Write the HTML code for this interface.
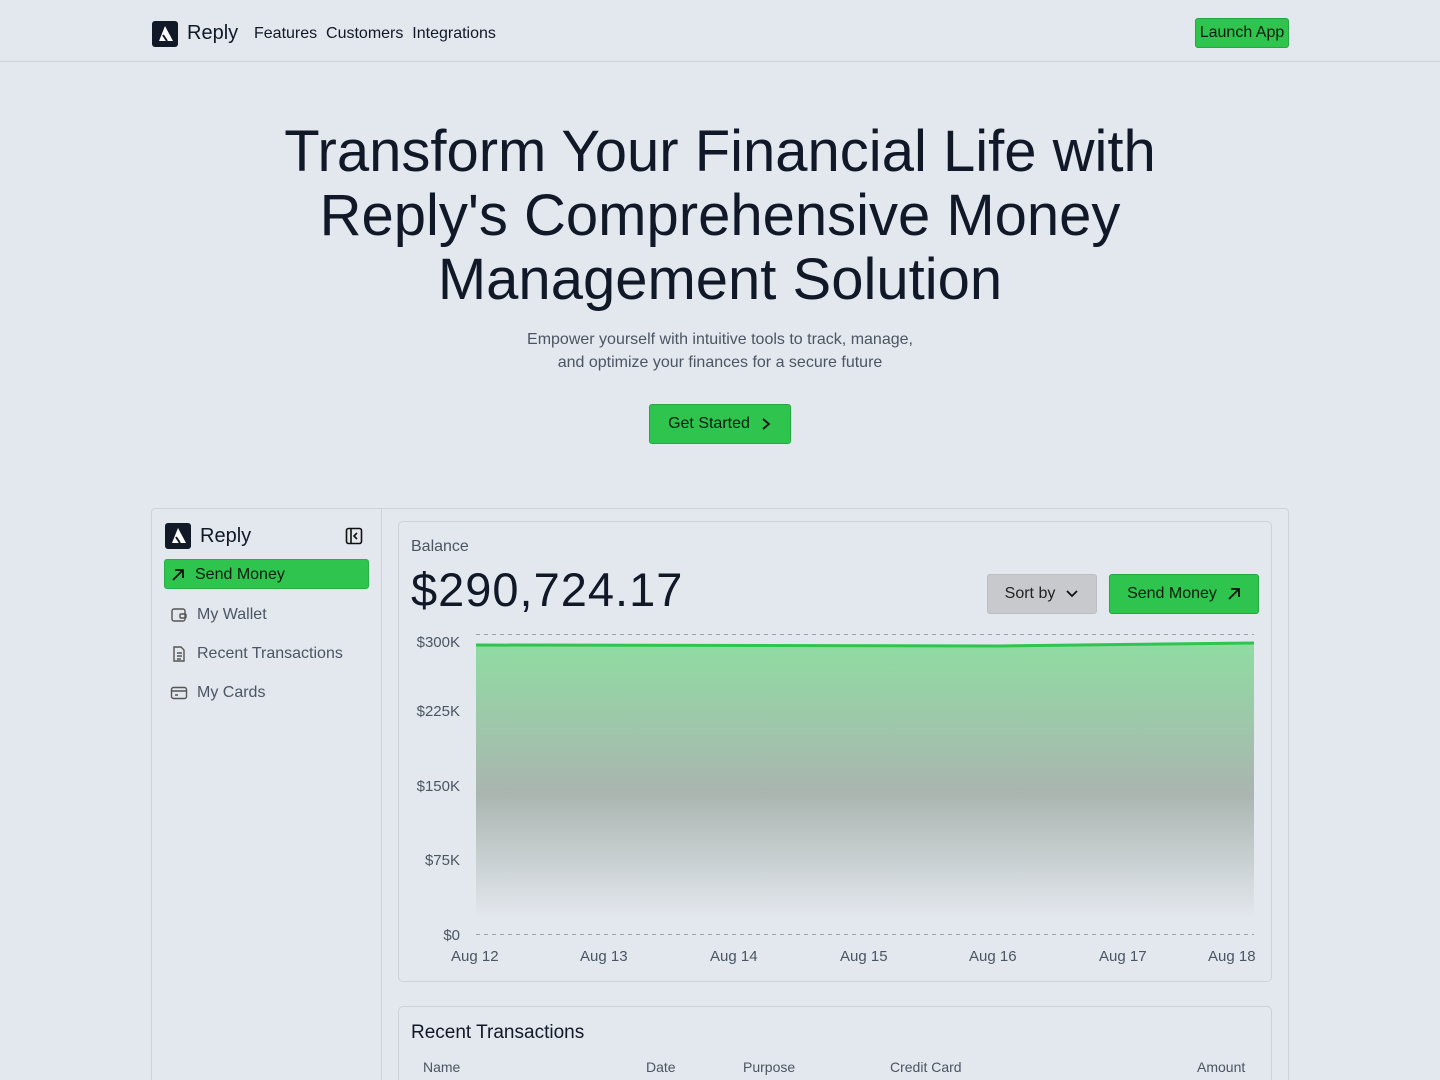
<!DOCTYPE html>
<html style="overflow:hidden;height:1080px"><head><meta charset="utf-8"><style>
*{box-sizing:border-box;margin:0;padding:0}
body{width:1440px;height:1080px;overflow:hidden;background:#e3e7ee;font-family:"Liberation Sans",sans-serif;color:#111827;position:relative}
#wrap{position:absolute;left:0;top:0;width:1440px;height:1080px;overflow:hidden}
.nav{position:absolute;top:0;left:0;width:1440px;height:62px;border-bottom:1px solid #cdd2da}
.logo{position:absolute;width:26px;height:26px;background:#111827;border-radius:3px}
.abs{position:absolute;white-space:nowrap}
.btn{position:absolute;background:#2ec44e;border:1px solid #22a83e;border-radius:3px;color:#0b1a0f;font-size:16px;display:flex;align-items:center;justify-content:center;gap:10px}
h1{position:absolute;top:120px;left:0;width:1440px;text-align:center;font-size:58px;font-weight:400;line-height:64px;letter-spacing:0}
.side{position:absolute;left:151px;top:508px;width:231px;height:600px;border:1px solid #cdd2da;border-radius:4px 0 0 0}
.main{position:absolute;left:381px;top:508px;width:908px;height:600px;border:1px solid #cdd2da;border-left:none;border-radius:0 4px 0 0}
.card{position:absolute;border:1px solid #cdd2da;border-radius:5px}
.item{position:absolute;left:170px;font-size:16px;color:#4b5563;display:flex;align-items:center;gap:9px}
.yl{position:absolute;width:60px;text-align:right;left:400px;font-size:15px;color:#4b5563}
.xl{position:absolute;top:948px;font-size:15px;color:#4b5563}
.th{position:absolute;top:1059px;font-size:14px;color:#4b5563}
</style></head><body><div id="wrap">
<div class="nav">
 <div class="logo" style="left:152px;top:21px"><svg width="26" height="26" viewBox="0 0 26 26"><path d="M13 5 L21 20 L7 20 Z" fill="#fff"/><path d="M11 14 L15 20" stroke="#111827" stroke-width="2"/></svg></div>
 <div class="abs" style="left:187px;top:22px;font-size:20px">Reply</div>
 <div class="abs" style="left:254px;top:25px;font-size:16px">Features&nbsp; Customers&nbsp; Integrations</div>
 <div class="btn" style="left:1195px;top:18px;width:94px;height:30px;font-size:16px">Launch App</div>
</div>
<h1>Transform Your Financial Life with<br>Reply's Comprehensive Money<br>Management Solution</h1>
<div class="abs" style="left:0;width:1440px;text-align:center;top:328px;font-size:16px;line-height:23px;color:#4b5563">Empower yourself with intuitive tools to track, manage,<br>and optimize your finances for a secure future</div>
<div class="btn" style="left:649px;top:404px;width:142px;height:40px">Get Started <svg width="12" height="14" viewBox="0 0 12 14"><path d="M3 2 L9 7 L3 12" stroke="#111" stroke-width="1.8" fill="none"/></svg></div>

<div class="side"></div>
<div class="main"></div>
<div class="logo" style="left:165px;top:523px"><svg width="26" height="26" viewBox="0 0 26 26"><path d="M13 5 L21 20 L7 20 Z" fill="#fff"/><path d="M11 14 L15 20" stroke="#111827" stroke-width="2"/></svg></div>
<div class="abs" style="left:200px;top:525px;font-size:20px">Reply</div>
<svg class="abs" style="left:345px;top:527px" width="18" height="18" viewBox="0 0 18 18"><rect x="1.5" y="1.5" width="15" height="15" rx="2" stroke="#111" stroke-width="1.6" fill="none"/><path d="M6 2v14M12 6l-3 3 3 3" stroke="#111" stroke-width="1.6" fill="none"/></svg>
<div class="abs" style="left:164px;top:559px;width:205px;height:30px;background:#2ec44e;border-radius:3px;border:1px solid #26b045"></div>
<div class="item" style="top:566px;color:#0b1a0f"><svg width="16" height="16" viewBox="0 0 16 16"><path d="M3 13 L13 3 M5 3h8v8" stroke="#111" stroke-width="1.8" fill="none"/></svg>Send Money</div>
<div class="item" style="top:606px"><svg width="18" height="18" viewBox="0 0 18 18"><rect x="2" y="3" width="13" height="12" rx="2" stroke="#555" stroke-width="1.4" fill="none"/><rect x="10" y="8" width="6" height="4" rx="1" stroke="#555" stroke-width="1.4" fill="none"/></svg>My Wallet</div>
<div class="item" style="top:645px"><svg width="18" height="18" viewBox="0 0 18 18"><path d="M4 2h7l3 3v11H4z M7 8h5M7 11h5M7 14h4" stroke="#555" stroke-width="1.4" fill="none"/></svg>Recent Transactions</div>
<div class="item" style="top:684px"><svg width="18" height="18" viewBox="0 0 18 18"><rect x="1.5" y="3.5" width="15" height="11" rx="2" stroke="#555" stroke-width="1.4" fill="none"/><path d="M2 7h14M5 11h3" stroke="#555" stroke-width="1.4"/></svg>My Cards</div>

<div class="card" style="left:398px;top:521px;width:874px;height:461px"></div>
<div class="abs" style="left:411px;top:538px;font-size:16px;color:#4b5563">Balance</div>
<div class="abs" style="left:411px;top:562px;font-size:47px;letter-spacing:1px">$290,724.17</div>
<div class="btn" style="left:987px;top:574px;width:110px;height:40px;background:#c7c9cd;border-color:#bbbec3;color:#222">Sort by <svg width="14" height="10" viewBox="0 0 14 10"><path d="M2 2l5 5 5-5" stroke="#111" stroke-width="1.8" fill="none"/></svg></div>
<div class="btn" style="left:1109px;top:574px;width:150px;height:40px">Send Money <svg width="14" height="14" viewBox="0 0 14 14"><path d="M2 12L12 2M4 2h8v8" stroke="#111" stroke-width="1.8" fill="none"/></svg></div>
<svg class="abs" style="left:0;top:0" width="1440" height="1000">
<defs><linearGradient id="g" x1="0" y1="0" x2="0" y2="1"><stop offset="0" stop-color="#8fdca2"/><stop offset="0.55" stop-color="#aab5b0"/><stop offset="1" stop-color="#e3e7ee"/></linearGradient></defs>
<g stroke="#9ca3af" stroke-dasharray="4 4" stroke-width="1"><line x1="476" x2="1254" y1="634.5" y2="634.5"/><line x1="476" x2="1254" y1="709.5" y2="709.5"/><line x1="476" x2="1254" y1="784.5" y2="784.5"/><line x1="476" x2="1254" y1="859.5" y2="859.5"/><line x1="476" x2="1254" y1="934.5" y2="934.5"/></g>
<path d="M476 645 L1000 646 L1254 643 L1254 918 L476 918Z" fill="url(#g)"/>
<path d="M476 645 L1000 646 L1254 643" stroke="#2ec44e" stroke-width="3" fill="none"/>
</svg>
<div class="yl" style="top:634px">$300K</div>
<div class="yl" style="top:703px">$225K</div>
<div class="yl" style="top:778px">$150K</div>
<div class="yl" style="top:852px">$75K</div>
<div class="yl" style="top:927px">$0</div>
<div class="xl" style="left:451px">Aug 12</div><div class="xl" style="left:580px">Aug 13</div><div class="xl" style="left:710px">Aug 14</div><div class="xl" style="left:840px">Aug 15</div><div class="xl" style="left:969px">Aug 16</div><div class="xl" style="left:1099px">Aug 17</div><div class="xl" style="left:1208px">Aug 18</div>

<div class="card" style="left:398px;top:1006px;width:874px;height:100px"></div>
<div class="abs" style="left:411px;top:1022px;font-size:19px">Recent Transactions</div>
<div class="th" style="left:423px">Name</div><div class="th" style="left:646px">Date</div><div class="th" style="left:743px">Purpose</div><div class="th" style="left:890px">Credit Card</div><div class="th" style="left:1197px">Amount</div>
</div></body></html>
